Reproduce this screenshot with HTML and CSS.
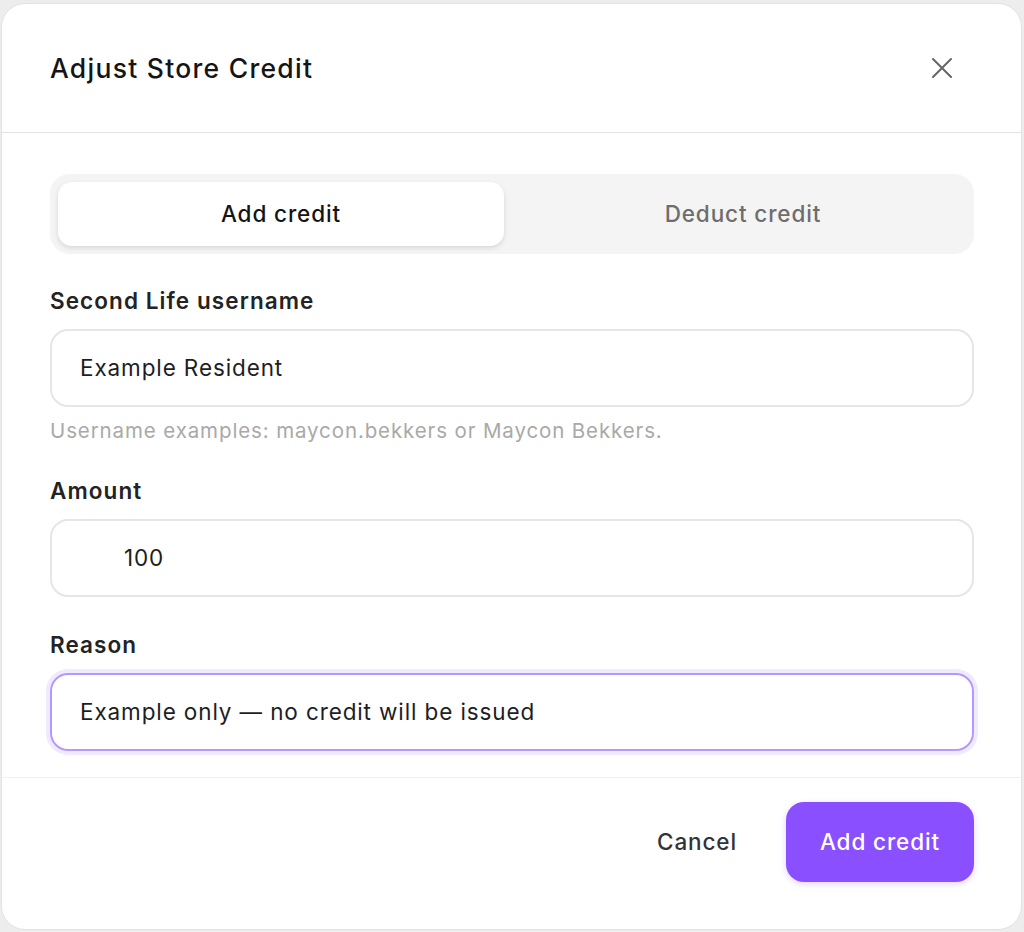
FILE: index.html
```html
<!DOCTYPE html>
<html lang="en">
<head>
<meta charset="utf-8">
<title>Adjust Store Credit</title>
<link rel="stylesheet" href="styles.css">
</head>
<body>
<div class="dialog">
  <header class="dialog-header">
    <h1 class="dialog-title">Adjust Store Credit</h1>
    <button class="close-btn" aria-label="Close">
      <svg width="24" height="24" viewBox="0 0 24 24" fill="none" stroke="currentColor" stroke-width="2" stroke-linecap="round"><path d="M3 3 L21 21 M21 3 L3 21"/></svg>
    </button>
  </header>
  <div class="dialog-body">
    <div class="segmented">
      <button class="seg-tab active">Add credit</button>
      <button class="seg-tab">Deduct credit</button>
    </div>
    <div class="field">
      <label class="field-label">Second Life username</label>
      <div class="input">Example Resident</div>
      <p class="helper">Username examples: maycon.bekkers or Maycon Bekkers.</p>
    </div>
    <div class="field">
      <label class="field-label">Amount</label>
      <div class="input input-amount">100</div>
    </div>
    <div class="field">
      <label class="field-label">Reason</label>
      <div class="input input-focus">Example only — no credit will be issued</div>
    </div>
  </div>
  <footer class="dialog-footer">
    <button class="btn-cancel">Cancel</button>
    <button class="btn-primary">Add credit</button>
  </footer>
</div>
</body>
</html>
```
FILE: styles.css
```css
* { box-sizing: border-box; }
html, body { margin: 0; padding: 0; }
body {
  background: #ededed;
  font-family: "Inter", "Liberation Sans", sans-serif;
  letter-spacing: 0.055em;
  color: #1e1e1e;
  height: 932px;
  overflow: hidden;
}
button { letter-spacing: inherit; }
.dialog {
  margin: 3px 2px 0 1px;
  height: 927px;
  background: #fff;
  border: 1px solid #e2e2e2;
  border-radius: 24px;
  display: flex;
  flex-direction: column;
}
.dialog-header {
  height: 129px;
  border-bottom: 1px solid #e4e4e4;
  display: flex;
  align-items: center;
  justify-content: space-between;
  padding: 0 67px 0 48px;
}
.dialog-title {
  margin: 0;
  font-size: 26.5px;
  font-weight: 500;
  letter-spacing: 0.048em;
  color: #151515;
}
.close-btn {
  border: 0;
  background: none;
  padding: 0;
  width: 24px;
  height: 24px;
  color: #666;
  display: flex;
}
.dialog-body {
  padding: 41px 47px 26px 48px;
  border-bottom: 1px solid #f0f0f0;
}
.segmented {
  background: #f4f4f4;
  border-radius: 20px;
  padding: 8px;
  display: grid;
  grid-template-columns: 1fr 1fr;
  gap: 16px;
  height: 80px;
}
.seg-tab {
  border: 0;
  background: transparent;
  border-radius: 14px;
  font-family: inherit;
  font-size: 22.5px;
  font-weight: 500;
  color: #6d6d6d;
  padding: 0 0 2px;
}
.seg-tab.active {
  background: #fff;
  color: #151515;
  box-shadow: 0 2px 5px rgba(0,0,0,0.12);
}
.field { margin-top: 33px; }
.field + .field { margin-top: 34px; }
.field-label {
  display: block;
  font-size: 22.5px;
  font-weight: 600;
  letter-spacing: 0.048em;
  line-height: 28px;
  color: #232323;
  margin-bottom: 14px;
}
.input {
  height: 78px;
  border: 2px solid #e6e6e6;
  border-radius: 18px;
  display: flex;
  align-items: center;
  padding: 0 0 2px 28px;
  font-size: 22.5px;
  color: #1e1e1e;
}
.input-amount { padding-left: 72px; }
.input-focus {
  border-color: #b497ff;
  box-shadow: 0 0 0 4px #f0eaff;
}
.helper {
  margin: 12px 0 0;
  font-size: 20.5px;
  line-height: 24px;
  color: #a9a9a9;
}
.dialog-footer {
  flex: 1;
  display: flex;
  justify-content: flex-end;
  align-items: flex-start;
  padding: 24px 47px 0 0;
  gap: 49px;
}
.btn-cancel {
  border: 0;
  background: none;
  font-family: inherit;
  font-size: 22.5px;
  font-weight: 500;
  color: #333;
  height: 80px;
  padding: 0 0 2px;
}
.btn-primary {
  border: 0;
  background: #8a4fff;
  color: #fff;
  font-family: inherit;
  font-size: 22.5px;
  font-weight: 500;
  height: 80px;
  width: 188px;
  border-radius: 18px;
  padding: 0 0 2px;
  box-shadow: 0 2px 6px rgba(138,79,255,0.25);
}
```
